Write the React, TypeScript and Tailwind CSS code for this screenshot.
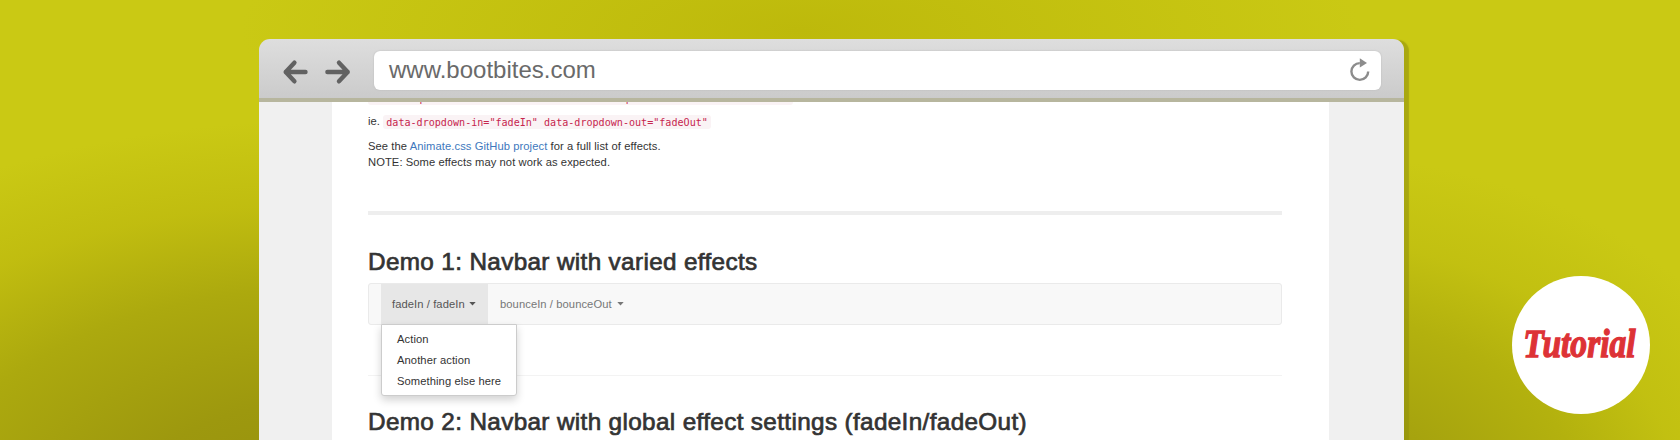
import React from "react";

const demoItems = ["Action", "Another action", "Something else here"];

function Caret({ className }: { className: string }) {
  return (
    <svg width="7" height="4" viewBox="0 0 7 4" className={className}>
      <path d="M0.3 0H6.7L3.5 3.4Z" fill="currentColor" />
    </svg>
  );
}

function Toolbar() {
  return (
    <header className="flex h-[63px] shrink-0 items-start rounded-t-[11px] border-b-4 border-[#b7b69e] bg-linear-to-b from-[#dedede] to-[#cbcbcb] pt-3 pl-[23px]">
      <svg width="70" height="28" viewBox="0 0 70 28" className="mt-[6.5px] shrink-0" fill="none" stroke="#626262" strokeWidth="4.4" strokeLinecap="round" strokeLinejoin="round">
        <path d="M12.4 4.7L3.7 14L12.4 23.3M3.7 14H23.5" />
        <path d="M57 4.7L65.7 14L57 23.3M65.7 14H45.4" />
      </svg>
      <div className="ml-[22px] flex h-[39px] w-[1007px] items-center justify-between rounded-md bg-white pr-[11px] pl-[15px] shadow-[0_0_2px_#b8b8b8]">
        <span className="-mt-[1px] text-[24px] leading-[36px] text-[#6a6a6a]">www.bootbites.com</span>
        <svg width="20" height="26" viewBox="0 0 20 26" fill="none">
          <path d="M18.2 13.5A8.4 8.4 0 1 1 9.8 5.1" stroke="#8c8c8c" strokeWidth="2.4" />
          <path d="M9.8 0.3V9.5L17 5Z" fill="#8c8c8c" />
        </svg>
      </div>
    </header>
  );
}

function Code({ children }: { children: React.ReactNode }) {
  return (
    <code className="rounded-[3px] bg-[#faf3f5] px-[3px] py-[1.5px] font-['DejaVu_Sans_Mono',monospace] text-[10.08px] tracking-normal text-[#c7254e]">
      {children}
    </code>
  );
}

function Heading({ children }: { children: React.ReactNode }) {
  return (
    <h2 className="h-[30px] text-[24.3px] leading-[30px] tracking-[0.35px] whitespace-nowrap text-[#333] [-webkit-text-stroke:0.7px_#333]">
      {children}
    </h2>
  );
}

export default function App() {
  return (
    <div className="relative h-[440px] w-[1680px] overflow-hidden bg-[#cac914] bg-[radial-gradient(ellipse_700px_400px_at_330px_520px,#958f0e,#9d980e_30%,#aca90e_58%,#bfbb0fdd_79%,#cac91400),radial-gradient(ellipse_490px_360px_at_1310px_515px,#9a960e,#a5a20e_28%,#b3b10e_56%,#c0be10cc_76%,#cac91400),radial-gradient(ellipse_560px_160px_at_800px_30px,#bdb90b,#bdb90b00)] pt-[39px] pl-[259px] font-['Liberation_Sans',Arial,sans-serif]">
      <div className="flex h-[401px] w-[1145px] flex-col rounded-t-[11px] shadow-[5px_1px_1px_#8f8f0c90]">
        <Toolbar />
        <main className="flex flex-1 overflow-hidden bg-[#f0f0f0] pl-[73px]">
          <div className="w-[997px] bg-white pr-[47px] pl-9 text-[11.2px] tracking-[0.08px] text-[#333]">
            <p className="-mt-[13px] h-[24px] leading-4"><Code>data-dropdown-in="animate-effect" data-dropdown-out="animate-effects"</Code></p>
            <p className="h-[25px] leading-4">ie. <Code>data-dropdown-in="fadeIn" data-dropdown-out="fadeOut"</Code></p>
            <p className="leading-4">
              See the <a className="text-[#4078bd]">Animate.css GitHub project</a> for a full list of effects.
              <br />
              NOTE: Some effects may not work as expected.
            </p>
            <hr className="mt-[41px] mb-[32px] border-t-4 border-[#eee]" />
            <Heading>Demo 1: Navbar with varied effects</Heading>
            <nav className="mt-[6px] flex h-[42px] rounded-[3px] border border-[#eaeaea] bg-[#f8f8f8] pl-3">
              <div className="relative flex w-[107px] items-center bg-[#e7e7e7] pl-[11px] text-[#555]">
                fadeIn / fadeIn
                <Caret className="ml-[4px]" />
                <ul className="absolute top-[40px] left-0 h-[72px] w-[136px] rounded-b-[3px] border border-[#ccc] bg-white pt-1 pl-[15px] leading-[21px] text-[#333] shadow-[0_4px_8px_#0000002e]">
                  {demoItems.map((item) => <li key={item}>{item}</li>)}
                </ul>
              </div>
              <div className="flex items-center pl-3 text-[#777]">
                bounceIn / bounceOut
                <Caret className="ml-[5px]" />
              </div>
            </nav>
            <hr className="mt-[50px] mb-[31px] border-[#f3f3f3]" />
            <Heading>Demo 2: Navbar with global effect settings (fadeIn/fadeOut)</Heading>
          </div>
        </main>
      </div>
      <div className="absolute top-[276px] left-[1512px] flex size-[138px] items-center justify-center rounded-full bg-white pr-[3px]">
        <span className="-mt-[2px] scale-x-[0.86] font-['Liberation_Serif',serif] text-[39px] font-bold text-[#dd3236] italic [-webkit-text-stroke:1.3px_#dd3236]">Tutorial</span>
      </div>
    </div>
  );
}
